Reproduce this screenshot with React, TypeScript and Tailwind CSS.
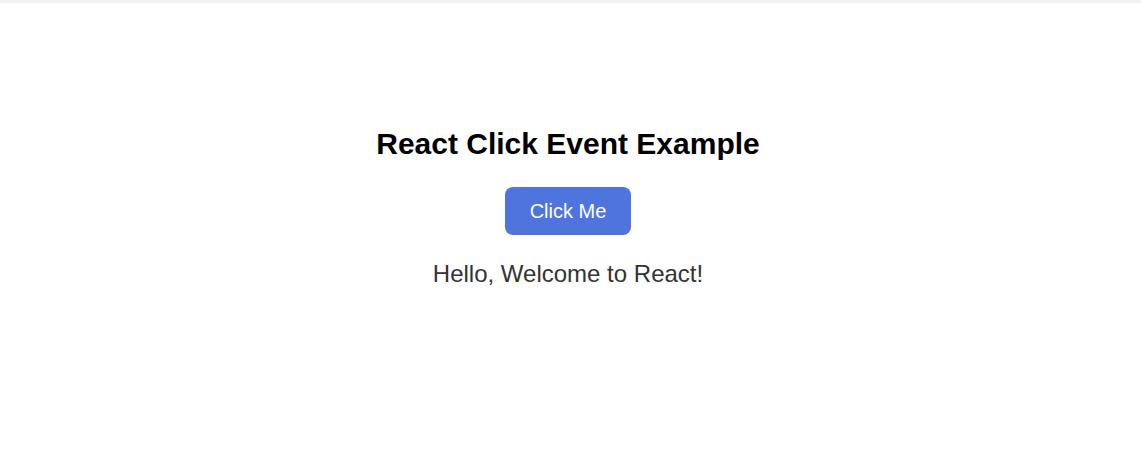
import React, { useState } from 'react';

const App: React.FC = () => {
  const [message, setMessage] = useState('Hello, Welcome to React!');

  return (
    <div className="min-h-[452px] bg-white font-['Liberation_Sans',Arial,sans-serif]">
      {/* Top strip */}
      <div className="h-[3px] bg-[#f2f2f2]" />

      <div className="flex flex-col items-center pt-[123px] pr-[5px]">
        <h1 className="text-[30px] leading-[35px] font-bold text-black">React Click Event Example</h1>

        <button
          onClick={() => setMessage('Hello, Welcome to React!')}
          className="mt-[26px] h-[48px] w-[126px] rounded-[8px] bg-[#4f74de] text-[20px] leading-[23px] text-white"
        >
          Click Me
        </button>

        <p className="mt-[25px] text-[24px] leading-[28px] text-[#333333]">{message}</p>
      </div>
    </div>
  );
};

export default App;
